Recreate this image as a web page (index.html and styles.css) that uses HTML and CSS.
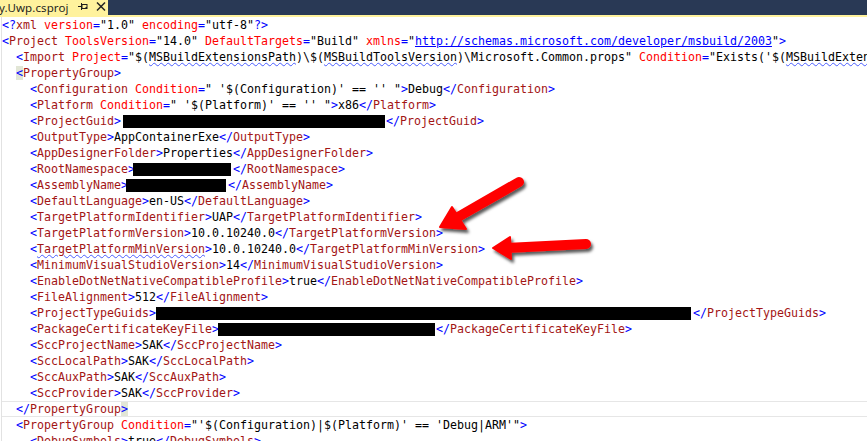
FILE: index.html
```html
<!DOCTYPE html>
<html>
<head>
<meta charset="utf-8">
<link rel="stylesheet" href="styles.css">
</head>
<body>
<div class="page">
  <div class="tabbar">
    <div class="tab">
      <span class="tab-title">y.Uwp.csproj</span>
      <svg class="tab-icons" width="40" height="15" viewBox="0 0 40 15">
        <line x1="10" y1="6.5" x2="13" y2="6.5" stroke="#1e1e1e" stroke-width="1"/>
        <line x1="13.5" y1="3" x2="13.5" y2="10" stroke="#1e1e1e" stroke-width="1"/>
        <rect x="14" y="4.5" width="5" height="4" fill="none" stroke="#1e1e1e" stroke-width="1"/>
        <line x1="17.5" y1="7.5" x2="19" y2="7.5" stroke="#1e1e1e" stroke-width="1"/>
        <line x1="29" y1="2.5" x2="37" y2="10.5" stroke="#1e1e1e" stroke-width="1.4"/>
        <line x1="37" y1="2.5" x2="29" y2="10.5" stroke="#1e1e1e" stroke-width="1.4"/>
      </svg>
    </div>
  </div>
  <div class="editor">
<div class="ln"><span class="d">&lt;?</span><span class="n">xml</span> <span class="a">version</span><span class="d">=</span>"1.0" <span class="a">encoding</span><span class="d">=</span>"utf-8"<span class="d">?&gt;</span></div>
<div class="ln"><span class="d">&lt;</span><span class="n">Project</span> <span class="a">ToolsVersion</span><span class="d">=</span>"14.0" <span class="a">DefaultTargets</span><span class="d">=</span>"Build" <span class="a">xmlns</span><span class="d">=</span>"<span class="u">http://schemas.microsoft.com/developer/msbuild/2003</span>"<span class="d">&gt;</span></div>
<div class="ln">  <span class="d">&lt;</span><span class="n">Import</span> <span class="a">Project</span><span class="d">=</span>"$(<span class="w">MSBuildExtensionsPath</span>)\$(<span class="w">MSBuildToolsVersion</span>)\Microsoft.Common.props" <span class="a">Condition</span><span class="d">=</span>"Exists('$(<span class="w">MSBuildExtensionsPath</span>)\$(<span class="w">MSBuildToolsVersion</span>)\Microsoft.Common.props')" <span class="d">/&gt;</span></div>
<div class="ln">  <span class="d hl">&lt;</span><span class="n">PropertyGroup</span><span class="d">&gt;</span></div>
<div class="ln">    <span class="d">&lt;</span><span class="n">Configuration</span> <span class="a">Condition</span><span class="d">=</span>" '$(Configuration)' == '' "<span class="d">&gt;</span>Debug<span class="d">&lt;/</span><span class="n">Configuration</span><span class="d">&gt;</span></div>
<div class="ln">    <span class="d">&lt;</span><span class="n">Platform</span> <span class="a">Condition</span><span class="d">=</span>" '$(Platform)' == '' "<span class="d">&gt;</span>x86<span class="d">&lt;/</span><span class="n">Platform</span><span class="d">&gt;</span></div>
<div class="ln">    <span class="d">&lt;</span><span class="n">ProjectGuid</span><span class="d">&gt;</span><span class="redact r-guid"></span><span class="d">&lt;/</span><span class="n">ProjectGuid</span><span class="d">&gt;</span></div>
<div class="ln">    <span class="d">&lt;</span><span class="n">OutputType</span><span class="d">&gt;</span>AppContainerExe<span class="d">&lt;/</span><span class="n">OutputType</span><span class="d">&gt;</span></div>
<div class="ln">    <span class="d">&lt;</span><span class="n">AppDesignerFolder</span><span class="d">&gt;</span>Properties<span class="d">&lt;/</span><span class="n">AppDesignerFolder</span><span class="d">&gt;</span></div>
<div class="ln">    <span class="d">&lt;</span><span class="n">RootNamespace</span><span class="d">&gt;</span><span class="redact r-ns"></span><span class="d">&lt;/</span><span class="n">RootNamespace</span><span class="d">&gt;</span></div>
<div class="ln">    <span class="d">&lt;</span><span class="n">AssemblyName</span><span class="d">&gt;</span><span class="redact r-asm"></span><span class="d">&lt;/</span><span class="n">AssemblyName</span><span class="d">&gt;</span></div>
<div class="ln">    <span class="d">&lt;</span><span class="n">DefaultLanguage</span><span class="d">&gt;</span>en-US<span class="d">&lt;/</span><span class="n">DefaultLanguage</span><span class="d">&gt;</span></div>
<div class="ln">    <span class="d">&lt;</span><span class="n">TargetPlatformIdentifier</span><span class="d">&gt;</span>UAP<span class="d">&lt;/</span><span class="n">TargetPlatformIdentifier</span><span class="d">&gt;</span></div>
<div class="ln">    <span class="d">&lt;</span><span class="n">TargetPlatformVersion</span><span class="d">&gt;</span>10.0.10240.0<span class="d">&lt;/</span><span class="n">TargetPlatformVersion</span><span class="d">&gt;</span></div>
<div class="ln">    <span class="d">&lt;</span><span class="n w">TargetPlatformMinVersion</span><span class="d">&gt;</span>10.0.10240.0<span class="d">&lt;/</span><span class="n">TargetPlatformMinVersion</span><span class="d">&gt;</span></div>
<div class="ln">    <span class="d">&lt;</span><span class="n">MinimumVisualStudioVersion</span><span class="d">&gt;</span>14<span class="d">&lt;/</span><span class="n">MinimumVisualStudioVersion</span><span class="d">&gt;</span></div>
<div class="ln">    <span class="d">&lt;</span><span class="n">EnableDotNetNativeCompatibleProfile</span><span class="d">&gt;</span>true<span class="d">&lt;/</span><span class="n">EnableDotNetNativeCompatibleProfile</span><span class="d">&gt;</span></div>
<div class="ln">    <span class="d">&lt;</span><span class="n">FileAlignment</span><span class="d">&gt;</span>512<span class="d">&lt;/</span><span class="n">FileAlignment</span><span class="d">&gt;</span></div>
<div class="ln">    <span class="d">&lt;</span><span class="n">ProjectTypeGuids</span><span class="d">&gt;</span><span class="redact r-types"></span><span class="d">&lt;/</span><span class="n">ProjectTypeGuids</span><span class="d">&gt;</span></div>
<div class="ln">    <span class="d">&lt;</span><span class="n">PackageCertificateKeyFile</span><span class="d">&gt;</span><span class="redact r-cert"></span><span class="d">&lt;/</span><span class="n">PackageCertificateKeyFile</span><span class="d">&gt;</span></div>
<div class="ln">    <span class="d">&lt;</span><span class="n">SccProjectName</span><span class="d">&gt;</span>SAK<span class="d">&lt;/</span><span class="n">SccProjectName</span><span class="d">&gt;</span></div>
<div class="ln">    <span class="d">&lt;</span><span class="n">SccLocalPath</span><span class="d">&gt;</span>SAK<span class="d">&lt;/</span><span class="n">SccLocalPath</span><span class="d">&gt;</span></div>
<div class="ln">    <span class="d">&lt;</span><span class="n">SccAuxPath</span><span class="d">&gt;</span>SAK<span class="d">&lt;/</span><span class="n">SccAuxPath</span><span class="d">&gt;</span></div>
<div class="ln">    <span class="d">&lt;</span><span class="n">SccProvider</span><span class="d">&gt;</span>SAK<span class="d">&lt;/</span><span class="n">SccProvider</span><span class="d">&gt;</span></div>
<div class="ln current">  <span class="d">&lt;/</span><span class="n">PropertyGroup</span><span class="d hl">&gt;</span></div>
<div class="ln">  <span class="d">&lt;</span><span class="n">PropertyGroup</span> <span class="a">Condition</span><span class="d">=</span>"'$(Configuration)|$(Platform)' == 'Debug|ARM'"<span class="d">&gt;</span></div>
<div class="ln">    <span class="d">&lt;</span><span class="n">DebugSymbols</span><span class="d">&gt;</span>true<span class="d">&lt;/</span><span class="n">DebugSymbols</span><span class="d">&gt;</span></div>
  </div>
  <svg class="arrows" width="867" height="441" viewBox="0 0 867 441">
    <defs>
      <filter id="sh" x="-20%" y="-20%" width="140%" height="160%">
        <feDropShadow dx="2" dy="3" stdDeviation="1.6" flood-color="#000" flood-opacity="0.65"/>
      </filter>
    </defs>
    <g filter="url(#sh)" fill="#ff0000" stroke="#ff0000">
      <line x1="519" y1="182" x2="458" y2="217" stroke-width="10" stroke-linecap="round"/>
      <polygon points="440,227 452,207 466,229" stroke-width="2" stroke-linejoin="round"/>
      <line x1="586" y1="244" x2="506" y2="248" stroke-width="10" stroke-linecap="round"/>
      <polygon points="493,248 510,237 511,259" stroke-width="2" stroke-linejoin="round"/>
    </g>
  </svg>
</div>
</body>
</html>
```

FILE: styles.css
```css
html, body {
  margin: 0;
  padding: 0;
  background: #ffffff;
}

.page {
  position: relative;
  width: 867px;
  height: 441px;
  overflow: hidden;
}

.tabbar {
  height: 15px;
  background: #293955;
  border-bottom: 2px solid #fff29d;
  display: flex;
}

.tab {
  width: 108px;
  height: 15px;
  background: #fff29d;
  display: flex;
  align-items: center;
  position: relative;
}

.tab-title {
  font-family: "Noto Sans", "Liberation Sans", sans-serif;
  font-size: 11.5px;
  line-height: 15px;
  color: #1e1e1e;
  margin-left: -1px;
  white-space: nowrap;
  letter-spacing: 0.1px;
}

.tab-icons {
  position: absolute;
  left: 68px;
  top: 0;
}

.editor {
  margin-left: 1px;
  border-left: 1px solid #e2e2e2;
  font-family: "DejaVu Sans Mono", "Liberation Mono", monospace;
  font-size: 11.63px;
  line-height: 16px;
  color: #000000;
}

.ln {
  height: 16px;
  white-space: pre;
}

.current {
  box-shadow: inset 0 1px 0 #e6e6e6, inset 0 -1px 0 #e6e6e6;
}

.d { color: #0000ff; }
.n { color: #a31515; }
.a { color: #ff0000; }
.u {
  color: #0000ff;
  text-decoration: underline;
}
.w {
  text-decoration-line: underline;
  text-decoration-style: wavy;
  text-decoration-color: #4a5cff;
  text-decoration-thickness: 1px;
  text-underline-offset: 1px;
}

.hl {
  background: #e2e6d6;
}

.redact {
  display: inline-block;
  height: 13px;
  background: #000000;
  vertical-align: top;
  margin-top: 2px;
}
.r-guid { width: 262px; margin-left: 2px; margin-right: 1px; }
.r-ns { width: 98px; margin-left: -2px; margin-right: 2px; }
.r-asm { width: 100px; margin-left: -2px; margin-right: 2px; }
.r-types { width: 535px; margin-right: 2px; }
.r-cert { width: 217px; margin-left: -1px; margin-right: 1px; }

.arrows {
  position: absolute;
  left: 0;
  top: 0;
  pointer-events: none;
}
```
